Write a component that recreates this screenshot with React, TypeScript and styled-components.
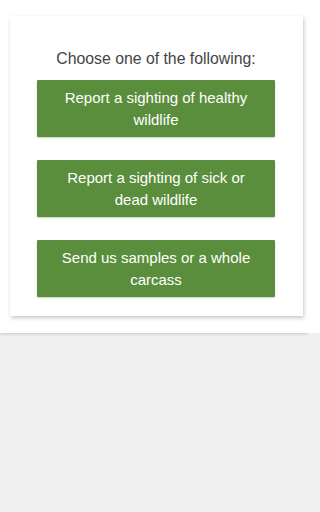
import React from 'react';
import styled, { createGlobalStyle } from 'styled-components';

const GlobalStyle = createGlobalStyle`
  html, body {
    margin: 0;
    padding: 0;
    background: linear-gradient(#ffffff 0 333px, #f1f0f0 333px);
    font-family: "Liberation Sans", Arial, sans-serif;
  }
`;

const Page = styled.div`
  width: 308px;
  height: 512px;
  overflow: hidden;
  background: #f1f0f0;
`;

const Top = styled.div`
  height: 333px;
  box-sizing: border-box;
  padding: 16px 5px 0 10px;
  background: #ffffff;
  box-shadow: 0 1px 3px rgba(0, 0, 0, 0.18);
  position: relative;
`;

const Card = styled.div`
  height: 300px;
  box-sizing: border-box;
  padding: 33px 28px 0 27px;
  background: #ffffff;
  box-shadow: 1px 2px 4px rgba(0, 0, 0, 0.22);
  display: flex;
  flex-direction: column;
`;

const Prompt = styled.p`
  margin: 0 0 11px;
  font-size: 15.8px;
  line-height: 20px;
  color: #444444;
  text-align: center;
`;

const Choices = styled.div`
  display: flex;
  flex-direction: column;
  gap: 23px;
`;

const ChoiceButton = styled.button`
  height: 57px;
  padding: 0 14px;
  border: none;
  border-radius: 1px;
  background: #5a8e3c;
  color: #ffffff;
  font-family: "Liberation Sans", Arial, sans-serif;
  font-size: 15px;
  line-height: 22px;
  text-align: center;
  box-shadow: 0 1px 2px rgba(0, 0, 0, 0.2);
  cursor: pointer;
`;

const choices = [
  'Report a sighting of healthy wildlife',
  'Report a sighting of sick or dead wildlife',
  'Send us samples or a whole carcass',
];

export default function App() {
  return (
    <Page>
      <GlobalStyle />
      <Top>
        <Card>
          <Prompt>Choose one of the following:</Prompt>
          <Choices>
            {choices.map((c) => (
              <ChoiceButton key={c}>{c}</ChoiceButton>
            ))}
          </Choices>
        </Card>
      </Top>
    </Page>
  );
}
